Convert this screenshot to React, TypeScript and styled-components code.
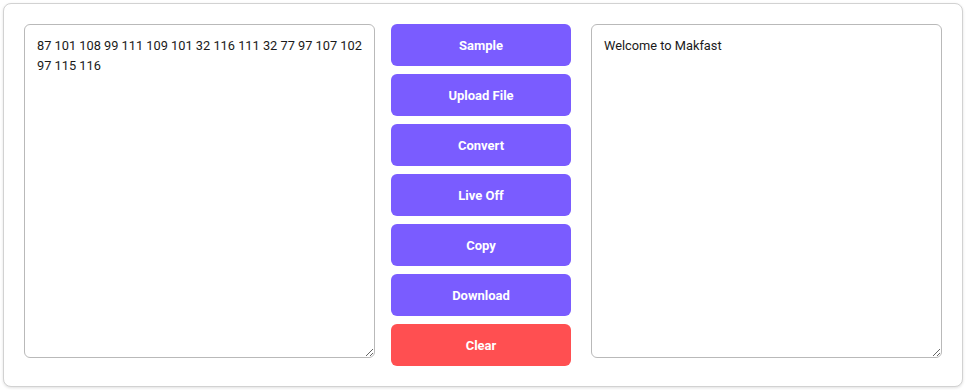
import React, { useState } from 'react'
import styled, { createGlobalStyle } from 'styled-components'

const GlobalStyle = createGlobalStyle`
  html, body {
    margin: 0;
    padding: 0;
    background: #ffffff;
  }
  body {
    padding: 3px;
    font-family: Roboto, 'Liberation Sans', sans-serif;
  }
`

const Card = styled.div`
  width: 960px;
  height: 384px;
  box-sizing: border-box;
  padding: 20px 20px 27px 20px;
  border: 1px solid #d2d2d2;
  border-radius: 8px;
  box-shadow: 0 1px 3px rgba(0, 0, 0, 0.12);
  background: #fff;
  display: flex;
  align-items: flex-start;
`

const TextBox = styled.textarea`
  width: 351px;
  height: 334px;
  box-sizing: border-box;
  padding: 11px 8px 10px 12px;
  border: 1px solid #b9b9b9;
  border-radius: 6px;
  font-family: Roboto, 'Liberation Sans', sans-serif;
  font-size: 12.8px;
  line-height: 20px;
  color: #1a1a1a;
  resize: both;
  outline: none;
  background: #fff;
`

const ButtonColumn = styled.div`
  width: 180px;
  margin: 0 20px 0 16px;
  display: flex;
  flex-direction: column;
  gap: 8px;
`

const ActionButton = styled.button<{ $danger?: boolean }>`
  height: 42px;
  width: 100%;
  border: none;
  border-radius: 6px;
  background: ${(p) => (p.$danger ? '#ff4f51' : '#7a5cff')};
  color: #ffffff;
  font-family: Roboto, 'Liberation Sans', sans-serif;
  font-weight: 700;
  font-size: 13px;
  cursor: pointer;
`

const labels = ['Sample', 'Upload File', 'Convert', 'Live Off', 'Copy', 'Download']

export default function App() {
  const [input, setInput] = useState(
    '87 101 108 99 111 109 101 32 116 111 32 77 97 107 102 97 115 116'
  )
  const [output, setOutput] = useState('Welcome to Makfast')

  return (
    <>
      <GlobalStyle />
      <Card>
        <TextBox value={input} onChange={(e) => setInput(e.target.value)} />
        <ButtonColumn>
          {labels.map((l) => (
            <ActionButton key={l}>{l}</ActionButton>
          ))}
          <ActionButton $danger>Clear</ActionButton>
        </ButtonColumn>
        <TextBox value={output} onChange={(e) => setOutput(e.target.value)} />
      </Card>
    </>
  )
}
